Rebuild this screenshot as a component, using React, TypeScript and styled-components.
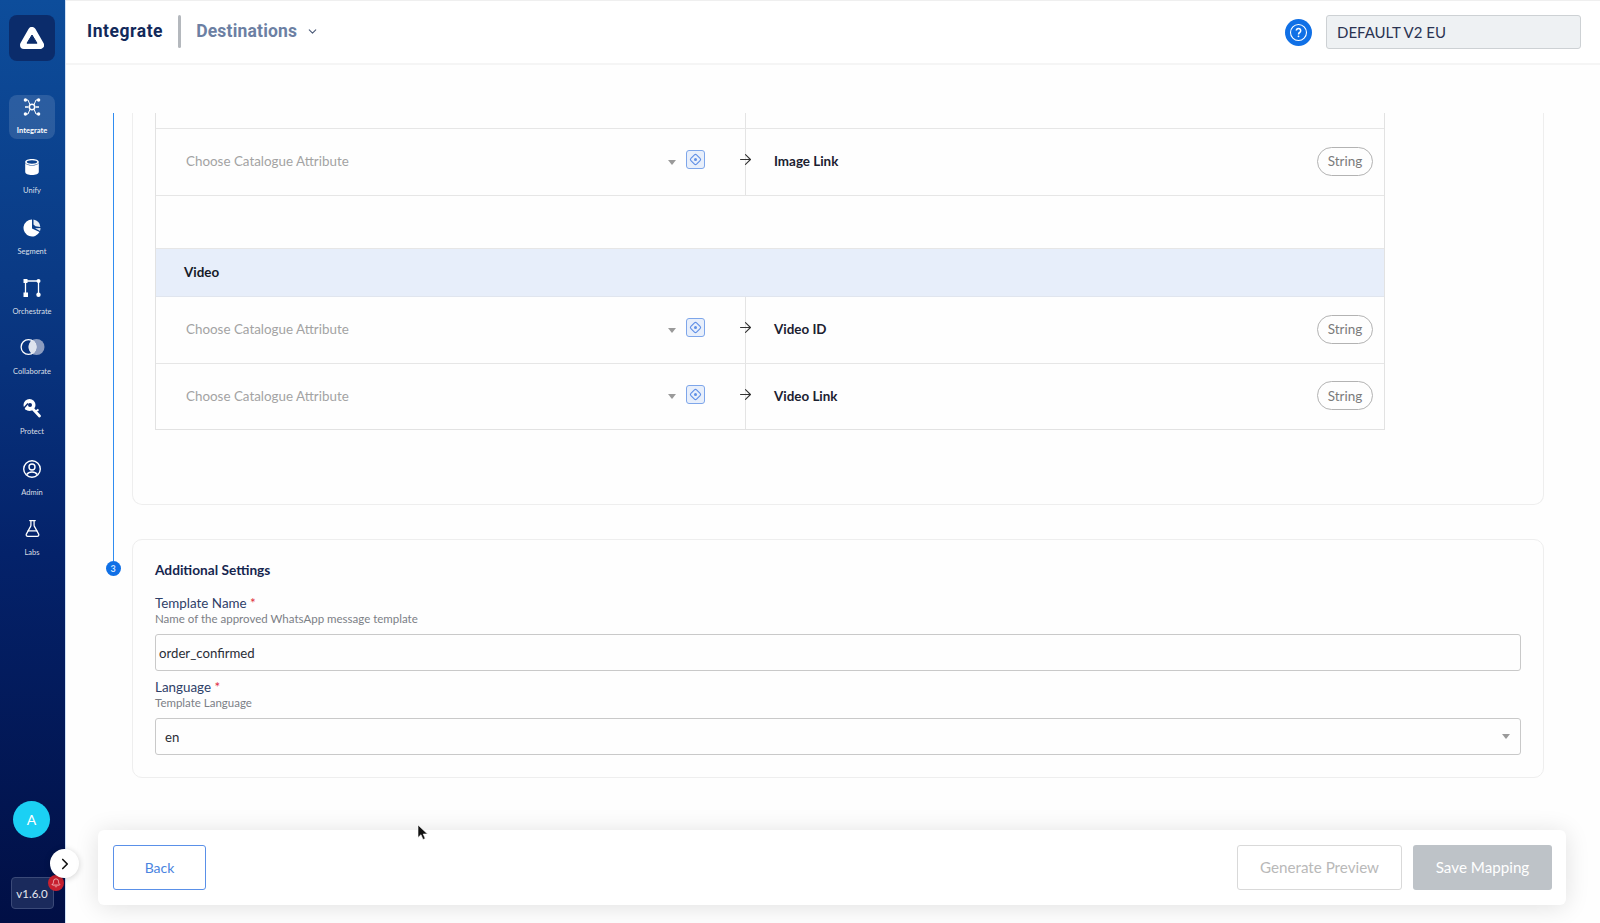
import React from 'react'
import styled, { createGlobalStyle } from 'styled-components'
import { ArrowRight, ChevronDown, ChevronRight, Bell, FlaskConical } from 'lucide-react'

const GlobalStyle = createGlobalStyle`
  html, body {
    margin: 0;
    height: 100%;
    background: #fefefe;
    font-family: 'Lato', 'Noto Sans', sans-serif;
  }
  * { box-sizing: border-box; }
`

const Page = styled.div`
  display: flex;
  height: 923px;
  width: 1600px;
  overflow: hidden;
  position: relative;
`

const Sidebar = styled.aside`
  width: 66px;
  flex: none;
  display: flex;
  flex-direction: column;
  align-items: center;
  padding: 15px 1px 14px 0;
  background: linear-gradient(180deg, #0d4d9b 0%, #0a3a85 30%, #04226a 60%, #010f45 100%);
  border-right: 1px solid #cfe0f5;
`

const Logo = styled.div`
  width: 46px;
  height: 46px;
  border-radius: 8px;
  background: #0b2c6b;
  display: flex;
  align-items: center;
  justify-content: center;
  margin-bottom: 34px;
`

const NavList = styled.nav`
  display: flex;
  flex-direction: column;
  gap: 16.3px;
`

const NavItem = styled.div<{ $active?: boolean }>`
  width: 46px;
  height: 44px;
  border-radius: 8px;
  display: flex;
  flex-direction: column;
  align-items: center;
  justify-content: space-between;
  padding: 2px 0 4px;
  background: ${({ $active }) => ($active ? 'rgba(255,255,255,0.13)' : 'transparent')};
  color: #fff;
`

const NavLabel = styled.span<{ $active?: boolean }>`
  font-size: 7.5px;
  line-height: 9px;
  white-space: nowrap;
  font-weight: ${({ $active }) => ($active ? 700 : 400)};
  color: ${({ $active }) => ($active ? '#fff' : 'rgba(255,255,255,0.85)')};
`

const Avatar = styled.div`
  width: 37px;
  height: 37px;
  border-radius: 50%;
  background: #1bd0f4;
  color: #fff;
  font-size: 14px;
  display: flex;
  align-items: center;
  justify-content: center;
  margin: auto 1px 39px 0;
`

const Version = styled.div`
  position: relative;
  width: 43px;
  height: 32px;
  border: 1px solid #3b4a78;
  border-radius: 4px;
  background: #1a2a5c;
  color: #e6e8ef;
  font-size: 11.5px;
  display: flex;
  align-items: center;
  justify-content: center;
`

const BellBadge = styled.span`
  position: absolute;
  top: -3px;
  right: -11px;
  width: 16px;
  height: 16px;
  border-radius: 50%;
  background: #c8202f;
  color: #f6c9cd;
  display: flex;
  align-items: center;
  justify-content: center;
`

const Toggle = styled.button`
  position: absolute;
  left: 50px;
  top: 849px;
  width: 29px;
  height: 29px;
  border: 0;
  padding: 0;
  border-radius: 50%;
  background: #fff;
  color: #111;
  box-shadow: 0 1px 6px rgba(0, 0, 0, 0.18);
  display: flex;
  align-items: center;
  justify-content: center;
`

const Main = styled.div`
  flex: 1;
  display: flex;
  flex-direction: column;
  min-width: 0;
`

const Header = styled.header`
  height: 65px;
  flex: none;
  display: flex;
  align-items: center;
  padding: 0 19px 0 21px;
  background: #fff;
  border-top: 1px solid #efefef;
  border-bottom: 2px solid #f5f5f5;
`

const Crumb = styled.span`
  font-family: 'Roboto', sans-serif;
  font-size: 17.5px;
  font-weight: 700;
  letter-spacing: 0.55px;
  color: #12295a;
  margin-top: -2px;
`

const CrumbSeparator = styled.span`
  width: 3px;
  height: 33px;
  border-radius: 2px;
  background: #b4b8bd;
  margin: -2px 15px 0 15px;
`

const CrumbLink = styled(Crumb)`
  color: #6c7fa3;
  margin-right: 9px;
  letter-spacing: 0.2px;
`

const CrumbChevron = styled(ChevronDown)`
  margin-top: -2px;
`

const HelpButton = styled.span`
  width: 27px;
  height: 27px;
  border-radius: 50%;
  background: #1070e6;
  margin-left: auto;
  margin-right: 15px;
  transform: translateX(1px);
  display: flex;
  align-items: center;
  justify-content: center;
`

const AccountField = styled.div`
  width: 255px;
  height: 34px;
  border: 1px solid #cdd1d4;
  border-radius: 3px;
  background: #eef1f3;
  color: #2a3352;
  font-size: 15px;
  padding-left: 10px;
  display: flex;
  align-items: center;
`

const Content = styled.main`
  flex: 1;
  display: flex;
  overflow: hidden;
  padding: 48px 56px 0 39px;
`

const Rail = styled.div`
  width: 16px;
  flex: none;
  margin-right: 11px;
  display: flex;
  flex-direction: column;
  align-items: center;
`

const RailLine = styled.div`
  width: 1px;
  height: 448px;
  background: #2f8cf0;
`

const StepBadge = styled.span`
  width: 15px;
  height: 15px;
  border-radius: 50%;
  background: #1070e6;
  color: #cfe3ff;
  font-size: 9px;
  font-weight: 700;
  display: flex;
  align-items: center;
  justify-content: center;
`

const Sections = styled.div`
  flex: 1;
  display: flex;
  flex-direction: column;
  gap: 34px;
`

const MappingCard = styled.section`
  height: 392px;
  flex: none;
  padding: 0 158px 0 22px;
  border: 1px solid #eeeeee;
  border-top: 0;
  border-radius: 0 0 10px 10px;
`

const MappingTable = styled.div`
  border-left: 1px solid #e2e2e2;
  border-right: 1px solid #e2e2e2;
  border-bottom: 1px solid #e2e2e2;
`

const Row = styled.div<{ $height: number }>`
  display: grid;
  grid-template-columns: 590px 1fr;
  height: ${({ $height }) => $height}px;
  border-bottom: 1px solid #e6e6e6;
  &:last-child { border-bottom: 0; }
`

const AttributeCell = styled.div`
  display: flex;
  align-items: center;
  padding: 0 0 2px 30px;
  border-right: 1px solid #e4e4e4;
`

const Placeholder = styled.span`
  flex: 1;
  font-size: 13.4px;
  color: #a3a3a3;
`

const Caret = styled.span`
  width: 0;
  height: 0;
  border-left: 4.5px solid transparent;
  border-right: 4.5px solid transparent;
  border-top: 5px solid #9a9a9a;
`

const SmallCaret = styled(Caret)`
  margin: 2px 10px 0 0;
`

const ModeButton = styled.span`
  width: 19px;
  height: 19px;
  margin: -3px 32.5px 0 0;
  border: 1.5px solid #7ea6ea;
  border-radius: 3px;
  background: #e8effb;
  display: flex;
  align-items: center;
  justify-content: center;
`

const ArrowMark = styled.span`
  display: flex;
  margin: -3px -9px 0 0;
  color: #333;
  width: 17px;
`

const FieldCell = styled.div`
  display: flex;
  align-items: center;
  justify-content: space-between;
  padding: 0 11px 2px 28px;
`

const FieldName = styled.span`
  font-size: 13.4px;
  font-weight: 700;
  color: #1b2130;
`

const TypePill = styled.span`
  width: 56px;
  height: 29px;
  border: 1.5px solid #b3b3b3;
  border-radius: 15px;
  color: #7b7b7b;
  font-size: 13.5px;
  display: flex;
  align-items: center;
  justify-content: center;
`

const SpacerRow = styled.div`
  height: 53px;
  border-bottom: 1px solid #e6e6e6;
`

const GroupRow = styled.div`
  height: 48px;
  padding: 0 0 2px 28px;
  display: flex;
  align-items: center;
  background: #e7eefa;
  border-bottom: 1px solid #e0e5ee;
  font-size: 13.4px;
  font-weight: 700;
  color: #161a26;
`

const SettingsCard = styled.section`
  height: 239px;
  flex: none;
  padding: 21px 22px 0;
  border: 1px solid #eeeeee;
  border-radius: 10px;
`

const SettingsTitle = styled.h3`
  margin: 0 0 16px;
  font-size: 13.7px;
  line-height: 17px;
  font-weight: 700;
  color: #16264f;
`

const FieldLabel = styled.div`
  font-size: 13.4px;
  line-height: 18px;
  color: #2e4068;
  & b {
    color: #e0303f;
    font-weight: 400;
  }
`

const FieldHint = styled.div`
  font-size: 11.5px;
  line-height: 14px;
  margin-bottom: 8px;
  color: #7c7f86;
`

const InputBox = styled.div<{ $inset: number }>`
  height: 37px;
  margin-bottom: 7px;
  padding: 0 10px 0 ${({ $inset }) => $inset}px;
  border: 1px solid #c9c9c9;
  border-radius: 3px;
  display: flex;
  align-items: center;
  justify-content: space-between;
  font-size: 13.2px;
  color: #2a2d36;
`

const Footer = styled.footer`
  position: absolute;
  left: 98px;
  top: 830px;
  width: 1468px;
  height: 75px;
  padding: 15px 14px 15px 15px;
  display: flex;
  align-items: stretch;
  gap: 11px;
  border-radius: 6px;
  background: #fff;
  box-shadow: 0 2px 24px rgba(0, 0, 0, 0.12);
`

const BackButton = styled.button`
  width: 93px;
  margin-right: auto;
  padding-bottom: 2px;
  border: 1.5px solid #5a90e8;
  border-radius: 3px;
  background: #fff;
  color: #4a84e0;
  font: 14px 'Lato', sans-serif;
`

const PreviewButton = styled.button`
  width: 165px;
  padding-bottom: 2px;
  border: 1.5px solid #d9d9d9;
  border-radius: 3px;
  background: #fff;
  color: #b9b9b9;
  font: 15.2px 'Lato', sans-serif;
`

const SaveButton = styled.button`
  width: 139px;
  padding-bottom: 2px;
  border: 0;
  border-radius: 3px;
  background: #bec3c8;
  color: #fff;
  font: 15.2px 'Lato', sans-serif;
`

const Cursor = styled.svg`
  position: absolute;
  left: 417px;
  top: 824px;
`

const IntegrateIcon = () => (
  <svg width="20" height="20" viewBox="0 0 20 20" fill="none" stroke="#fff" strokeWidth="1">
    <circle cx="10" cy="10" r="2.700" strokeWidth="1.500" />
    <path d="M3.500 3h2.500L8 7.800M16.500 3H14l-2 4.800M3.500 17H6l2-4.800M16.500 17H14l-2-4.800" />
    <path d="M3 10h3.500M13.500 10H17" strokeWidth="1.400" />
    <g fill="#fff" stroke="none">
      <circle cx="3.400" cy="3" r="1.700" />
      <circle cx="16.600" cy="3" r="1.700" />
      <circle cx="3.400" cy="17" r="1.700" />
      <circle cx="16.600" cy="17" r="1.700" />
    </g>
  </svg>
)

const UnifyIcon = () => (
  <svg width="20" height="20" viewBox="0 0 20 20" fill="#fff" stroke="none">
    <path d="M3.200 6v8.800C3.200 17 6.200 18 10 18s6.800-1 6.800-3.200V6C15.600 8 12.800 8.600 10 8.600S4.400 8 3.200 6Z" />
    <path fillRule="evenodd" d="M10 2C6.200 2 3.200 3.200 3.200 5s3 3 6.800 3 6.800-1.200 6.800-3-3-3-6.800-3Zm0 1.300c3.100 0 5.300.9 5.300 1.700S13.100 6.700 10 6.700 4.700 5.800 4.700 5 6.900 3.300 10 3.300Z" />
  </svg>
)

const SegmentIcon = () => (
  <svg width="20" height="20" viewBox="0 0 20 20" fill="#fff">
    <path d="M10 1.500A8.500 8.500 0 1 0 17.500 14L10 10.500Z" />
    <path d="M11.500 1.600A8.300 8.300 0 0 1 18.300 9L13.500 8.200 11.500 6.500Z" fillOpacity="0.9" />
    <path d="M13 10.200l5.500-.2a8 8 0 0 1-.5 2.900Z" fillOpacity="0.85" />
  </svg>
)

const OrchestrateIcon = () => (
  <svg width="20" height="20" viewBox="0 0 20 20" fill="#fff" stroke="#fff" strokeWidth="1.300">
    <path d="M3.500 3h13M3.500 3v14M16.500 3v14" fill="none" />
    <rect x="1.500" y="1" width="4" height="4" stroke="none" />
    <rect x="14.500" y="1" width="4" height="4" rx="2" stroke="none" />
    <rect x="1.500" y="14.500" width="4.500" height="4.500" stroke="none" />
    <circle cx="16.500" cy="16.800" r="2.200" stroke="none" />
  </svg>
)

const CollaborateIcon = () => (
  <svg width="25" height="18" viewBox="0 0 25 18">
    <circle cx="16.500" cy="9" r="8" fill="#8b9cc0" />
    <circle cx="8.500" cy="9" r="7.400" fill="none" stroke="#fff" strokeWidth="1.300" />
    <path d="M12.500 2.100A8 8 0 0 1 12.500 15.900 8 8 0 0 1 12.500 2.100Z" fill="#dfe4ee" />
  </svg>
)

const ProtectIcon = () => (
  <svg width="20" height="20" viewBox="0 0 20 20" fill="none" stroke="#fff">
    <path d="M10 10 17.500 18" strokeWidth="2.800" strokeLinecap="round" />
    <path d="M13.500 13.500 16.500 11.500" strokeWidth="2" />
    <circle cx="7.500" cy="7" r="6" fill="#fff" stroke="none" />
    <circle cx="8" cy="7" r="2" fill="#0a2a70" stroke="none" />
    <path d="M1 11 6 5.500" stroke="#0a2a70" strokeWidth="1.400" />
  </svg>
)

const AdminIcon = () => (
  <svg width="20" height="20" viewBox="0 0 20 20" fill="none" stroke="#fff" strokeWidth="1.400">
    <circle cx="10" cy="10" r="8.300" />
    <circle cx="10" cy="8" r="3" />
    <path d="M4.800 15.500c1.200-1.800 3-2.500 5.200-2.500s4 .7 5.200 2.500" />
  </svg>
)

const NAV_ITEMS = [
  { label: 'Integrate', icon: <IntegrateIcon />, active: true },
  { label: 'Unify', icon: <UnifyIcon /> },
  { label: 'Segment', icon: <SegmentIcon /> },
  { label: 'Orchestrate', icon: <OrchestrateIcon /> },
  { label: 'Collaborate', icon: <CollaborateIcon /> },
  { label: 'Protect', icon: <ProtectIcon /> },
  { label: 'Admin', icon: <AdminIcon /> },
  { label: 'Labs', icon: <FlaskConical size={19} strokeWidth={1.6} /> },
]

const ModeIcon = () => (
  <svg width="13" height="13" viewBox="0 0 13 13" fill="none" stroke="#5f8fe6" strokeWidth="1.100">
    <rect x="2.500" y="2.500" width="8" height="8" rx="1.500" transform="rotate(45 6.500 6.500)" />
    <circle cx="6.500" cy="6.500" r="1.500" fill="#5f8fe6" stroke="none" />
  </svg>
)

const MappingRow = ({ field, height }: { field: string; height: number }) => (
  <Row $height={height}>
    <AttributeCell>
      <Placeholder>Choose Catalogue Attribute</Placeholder>
      <SmallCaret />
      <ModeButton>
        <ModeIcon />
      </ModeButton>
      <ArrowMark>
        <ArrowRight size={17} strokeWidth={1.5} />
      </ArrowMark>
    </AttributeCell>
    <FieldCell>
      <FieldName>{field}</FieldName>
      <TypePill>String</TypePill>
    </FieldCell>
  </Row>
)

export default function App() {
  return (
    <Page>
      <GlobalStyle />
      <Sidebar>
        <Logo>
          <svg width="24" height="22" viewBox="0 0 24 22">
            <path d="M12 4 20 18H4Z" fill="#fff" stroke="#fff" strokeWidth="8" strokeLinejoin="round" />
            <path d="M12 8 17 16.200H7Z" fill="#0b2c6b" stroke="#0b2c6b" strokeWidth="1" strokeLinejoin="round" />
          </svg>
        </Logo>
        <NavList>
          {NAV_ITEMS.map(({ label, icon, active }) => (
            <NavItem key={label} $active={active}>
              {icon}
              <NavLabel $active={active}>{label}</NavLabel>
            </NavItem>
          ))}
        </NavList>
        <Avatar>A</Avatar>
        <Version>
          v1.6.0
          <BellBadge>
            <Bell size={10} />
          </BellBadge>
        </Version>
      </Sidebar>
      <Toggle>
        <ChevronRight size={18} strokeWidth={2.2} />
      </Toggle>
      <Main>
        <Header>
          <Crumb>Integrate</Crumb>
          <CrumbSeparator />
          <CrumbLink>Destinations</CrumbLink>
          <CrumbChevron size={13} color="#4b5a78" />
          <HelpButton>
            <svg width="19" height="19" viewBox="0 0 19 19" fill="none" stroke="#fff" strokeWidth="1.100">
              <circle cx="9.500" cy="9.500" r="8" />
              <path d="M7.300 7.600a2.200 2.200 0 1 1 3.400 1.900c-.8.500-1.200.9-1.200 1.900" strokeWidth="1.500" />
              <circle cx="9.500" cy="13.300" r="0.900" fill="#fff" stroke="none" />
            </svg>
          </HelpButton>
          <AccountField>DEFAULT V2 EU</AccountField>
        </Header>
        <Content>
          <Rail>
            <RailLine />
            <StepBadge>3</StepBadge>
          </Rail>
          <Sections>
            <MappingCard>
              <MappingTable>
                <Row $height={16}>
                  <AttributeCell />
                  <FieldCell />
                </Row>
                <MappingRow field="Image Link" height={67} />
                <SpacerRow />
                <GroupRow>Video</GroupRow>
                <MappingRow field="Video ID" height={67} />
                <MappingRow field="Video Link" height={65} />
              </MappingTable>
            </MappingCard>
            <SettingsCard>
              <SettingsTitle>Additional Settings</SettingsTitle>
              <FieldLabel>
                Template Name <b>*</b>
              </FieldLabel>
              <FieldHint>Name of the approved WhatsApp message template</FieldHint>
              <InputBox $inset={3}>order_confirmed</InputBox>
              <FieldLabel>
                Language <b>*</b>
              </FieldLabel>
              <FieldHint>Template Language</FieldHint>
              <InputBox $inset={9}>
                en
                <Caret />
              </InputBox>
            </SettingsCard>
          </Sections>
        </Content>
      </Main>
      <Footer>
        <BackButton>Back</BackButton>
        <PreviewButton>Generate Preview</PreviewButton>
        <SaveButton>Save Mapping</SaveButton>
      </Footer>
      <Cursor width="12" height="17" viewBox="0 0 12 17">
        <path d="M1 1v12.500l3-2.800 2 4.800 2.200-1-2-4.500h4.300Z" fill="#111" stroke="#fff" strokeWidth="0.600" />
      </Cursor>
    </Page>
  )
}
